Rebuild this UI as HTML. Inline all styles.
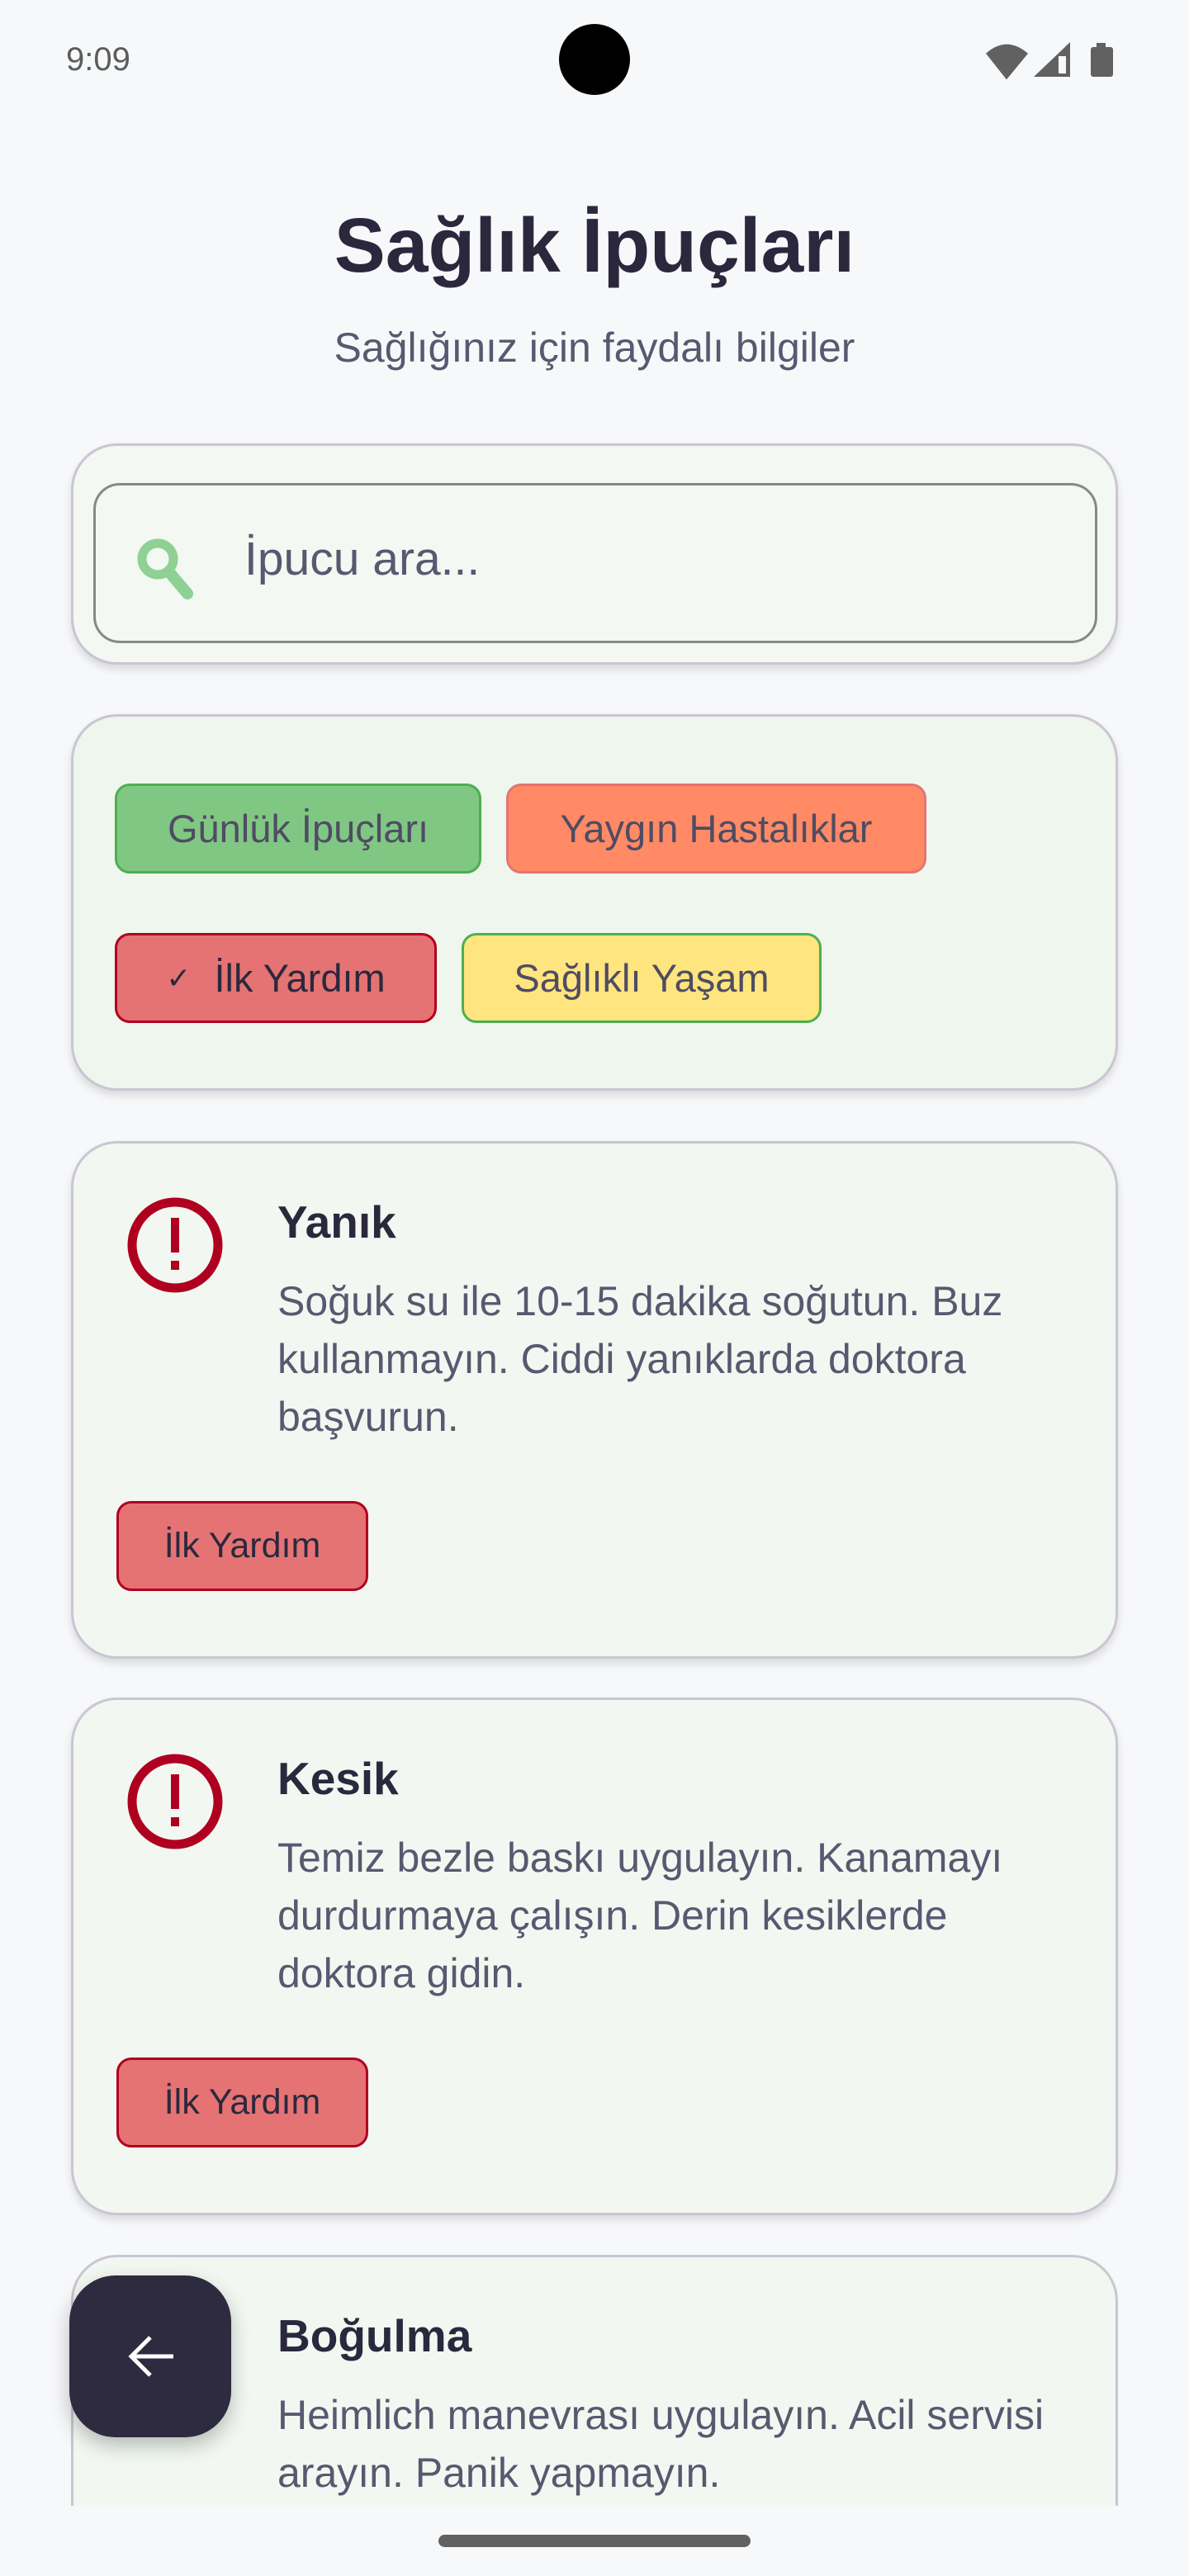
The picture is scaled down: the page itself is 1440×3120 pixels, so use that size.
<!DOCTYPE html>
<html><head><meta charset="utf-8"><style>
*{margin:0;padding:0;box-sizing:border-box}
html,body{width:1440px;height:3120px;overflow:hidden}
body{background:#f7f8fa;font-family:"Liberation Sans","DejaVu Sans",sans-serif;position:relative;color:#2b283d}
#wrap{position:absolute;left:0;top:0;width:1440px;height:3120px;overflow:hidden}
.abs{position:absolute}
.card{position:absolute;left:86px;width:1268px;border:3px solid #cbc5d3;border-radius:56px;background:#f2f8f1;box-shadow:0 6px 10px rgba(0,0,0,.12)}
.chip{position:absolute;height:109px;border:3px solid;border-radius:18px;font-size:47px;color:#4f4c62;display:flex;align-items:center;justify-content:center}
.title{position:absolute;left:247px;font-size:55px;font-weight:bold;color:#2b283d}
.body{position:absolute;left:247px;font-size:50px;line-height:70px;color:#5a5870;width:950px}
.tag{position:absolute;left:52px;width:305px;height:109px;background:#e57373;border:3px solid #b00020;border-radius:18px;font-size:43px;color:#2b283d;display:flex;align-items:center;justify-content:center}
.ic{position:absolute;left:64px;top:64px}
</style></head><body><div id="wrap">
<div class="abs" style="left:80px;top:50px;font-size:40px;color:#5c5c5c">9:09</div>
<div class="abs" style="left:677px;top:29px;width:86px;height:86px;border-radius:50%;background:#000"></div>
<svg class="abs" style="left:1186px;top:48px" width="190" height="50" viewBox="0 0 190 50">
<path d="M2 18 Q27 -6 53 18 L27 52 Z" fill="#616161" transform="translate(6,0) scale(1,0.93)"/>
<path d="M66 45 L110 3 L110 45 Z" fill="#616161"/><rect x="96" y="20" width="9" height="21" fill="#f7f8fa"/>
<rect x="142" y="4" width="11" height="6" fill="#616161"/><rect x="135" y="9" width="27" height="36" rx="3" fill="#616161"/>
</svg>
<div class="abs" style="left:0;width:1440px;top:244px;text-align:center;font-size:93px;font-weight:bold;color:#2b283d">Sağlık İpuçları</div>
<div class="abs" style="left:0;width:1440px;top:392px;text-align:center;font-size:50px;color:#5a5870">Sağlığınız için faydalı bilgiler</div>

<div class="card" style="top:537px;height:268px;background:#f3f8f2">
<div class="abs" style="left:24px;top:45px;width:1216px;height:194px;border:3px solid #858b84;border-radius:32px"></div>
<svg class="abs" style="left:70px;top:105px" width="90" height="90" viewBox="0 0 90 90"><circle cx="32" cy="32" r="19" fill="none" stroke="#8fd095" stroke-width="11"/><path d="M46 48 L68 74" stroke="#8fd095" stroke-width="14" stroke-linecap="round"/></svg>
<div class="abs" style="left:207px;top:104px;font-size:57px;color:#5a5870">İpucu ara...</div>
</div>

<div class="card" style="top:865px;height:456px;background:#eef6ee">
<div class="chip" style="left:50px;top:81px;width:444px;background:#81c784;border-color:#4caf50">Günlük İpuçları</div>
<div class="chip" style="left:524px;top:81px;width:509px;background:#ff8a65;border-color:#e57373">Yaygın Hastalıklar</div>
<div class="chip" style="left:50px;top:262px;width:390px;background:#e57373;border-color:#b00020;color:#2b283d"><span style="font-size:36px;margin-right:28px">✓</span>İlk Yardım</div>
<div class="chip" style="left:470px;top:262px;width:436px;background:#ffe57f;border-color:#4caf50">Sağlıklı Yaşam</div>
</div>

<div class="card" style="top:1382px;height:627px">
<svg class="ic" width="118" height="118" viewBox="0 0 118 118"><circle cx="59" cy="59" r="52" fill="none" stroke="#b00020" stroke-width="11"/><rect x="54" y="26" width="10" height="42" fill="#b00020"/><rect x="54" y="78" width="10" height="11" fill="#b00020"/></svg>
<div class="title" style="top:63px">Yanık</div>
<div class="body" style="top:156px">Soğuk su ile 10-15 dakika soğutun. Buz kullanmayın. Ciddi yanıklarda doktora başvurun.</div>
<div class="tag" style="top:433px">İlk Yardım</div>
</div>

<div class="card" style="top:2056px;height:627px">
<svg class="ic" width="118" height="118" viewBox="0 0 118 118"><circle cx="59" cy="59" r="52" fill="none" stroke="#b00020" stroke-width="11"/><rect x="54" y="26" width="10" height="42" fill="#b00020"/><rect x="54" y="78" width="10" height="11" fill="#b00020"/></svg>
<div class="title" style="top:63px">Kesik</div>
<div class="body" style="top:156px">Temiz bezle baskı uygulayın. Kanamayı durdurmaya çalışın. Derin kesiklerde doktora gidin.</div>
<div class="tag" style="top:433px">İlk Yardım</div>
</div>

<div class="card" style="top:2731px;height:380px;box-shadow:none">
<div class="title" style="top:63px">Boğulma</div>
<div class="body" style="top:156px">Heimlich manevrası uygulayın. Acil servisi arayın. Panik yapmayın.</div>
</div>
<div class="abs" style="left:0;top:3035px;width:1440px;height:85px;background:#f7f8fa"></div>
<div class="abs" style="left:531px;top:3070px;width:378px;height:15px;border-radius:8px;background:#616161"></div>

<div class="abs" style="left:84px;top:2756px;width:196px;height:196px;border-radius:56px;background:#2e2a40;box-shadow:0 10px 24px rgba(0,0,0,.25)">
<svg class="abs" style="left:68px;top:68px" width="60" height="60" viewBox="0 0 60 60"><path d="M58 30 H8 M30 7 L7 30 L30 53" fill="none" stroke="#fff" stroke-width="5"/></svg>
</div>
</div></body></html>
